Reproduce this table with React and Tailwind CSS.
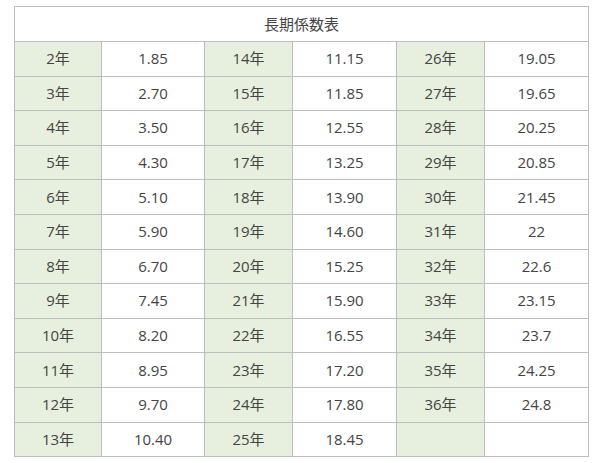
import React from 'react';

const rows = [
  ['2年', '1.85', '14年', '11.15', '26年', '19.05'],
  ['3年', '2.70', '15年', '11.85', '27年', '19.65'],
  ['4年', '3.50', '16年', '12.55', '28年', '20.25'],
  ['5年', '4.30', '17年', '13.25', '29年', '20.85'],
  ['6年', '5.10', '18年', '13.90', '30年', '21.45'],
  ['7年', '5.90', '19年', '14.60', '31年', '22'],
  ['8年', '6.70', '20年', '15.25', '32年', '22.6'],
  ['9年', '7.45', '21年', '15.90', '33年', '23.15'],
  ['10年', '8.20', '22年', '16.55', '34年', '23.7'],
  ['11年', '8.95', '23年', '17.20', '35年', '24.25'],
  ['12年', '9.70', '24年', '17.80', '36年', '24.8'],
  ['13年', '10.40', '25年', '18.45', '', ''],
];

export default function App() {
  return (
    <div
      className="min-h-screen bg-white pt-[6px] pl-[14px] text-[15px] text-[#444]"
      style={{ fontFamily: '"Open Sans", "Noto Sans CJK JP", sans-serif' }}
    >
      <table className="w-[574px] table-fixed border-collapse border border-[#b4b4b4]">
        <colgroup>
          <col className="w-[87px]" />
          <col className="w-[103px]" />
          <col className="w-[88px]" />
          <col className="w-[104px]" />
          <col className="w-[88px]" />
          <col className="w-[104px]" />
        </colgroup>
        <thead>
          <tr className="h-[35px]">
            <th colSpan={6} className="border border-[#bdbdbd] bg-white font-normal text-center">
              長期係数表
            </th>
          </tr>
        </thead>
        <tbody>
          {rows.map((r, i) => (
            <tr key={i} className="h-[34.6px]">
              {r.map((c, j) => (
                <td
                  key={j}
                  className={
                    'border border-[#bdbdbd] text-center leading-none ' +
                    (j % 2 === 0 ? 'bg-[#e7f0de]' : 'bg-white')
                  }
                >
                  {c}
                </td>
              ))}
            </tr>
          ))}
        </tbody>
      </table>
    </div>
  );
}
